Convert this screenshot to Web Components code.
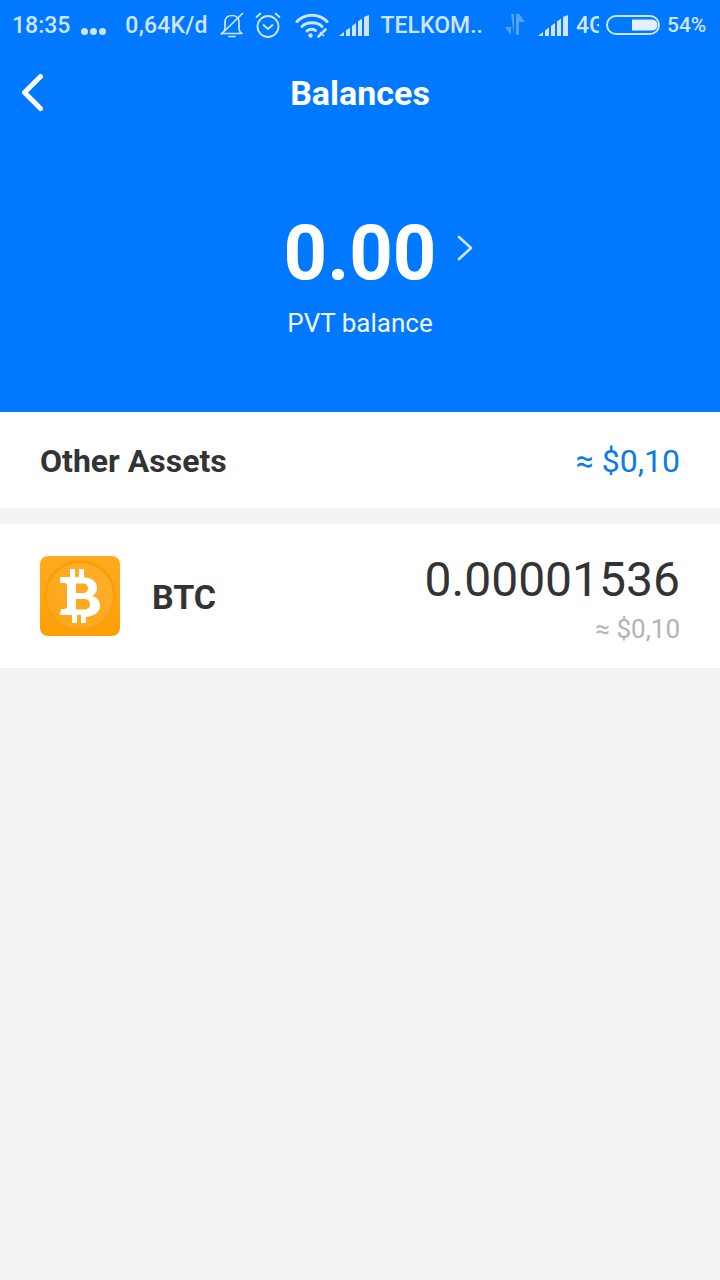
<!DOCTYPE html>
<html>
<head>
<meta charset="utf-8">
<style>
    html, body { margin: 0; padding: 0; height: 100%; background: #f3f3f3; }
    body { font-family: Roboto, "Liberation Sans", sans-serif; }
    balances-page { height: 1280px; }
</style>
</head>
<body>
<balances-page>
    <status-bar slot="header"></status-bar>
    <balance-header slot="header" title="Balances" amount="0.00" label="PVT balance"></balance-header>
    <assets-summary label="Other Assets" value="≈ $0,10"></assets-summary>
    <asset-row name="BTC" amount="0.00001536" value="≈ $0,10"></asset-row>
</balances-page>

<script>
class BalancesPage extends HTMLElement {
    constructor() {
        super();
        this.attachShadow({mode: 'open'});
        this.shadowRoot.innerHTML = `
            <style>
                :host { display: flex; flex-direction: column; width: 720px; background: #f3f3f3; overflow: hidden; }
                .top { background: #0078ff; display: flex; flex-direction: column; }
            </style>
            <div class="top"><slot name="header"></slot></div>
            <slot></slot>
        `;
    }
}

class StatusBar extends HTMLElement {
    constructor() {
        super();
        this.attachShadow({mode: 'open'});
        const bars = `<svg width="31" height="21" viewBox="0 0 31 21" fill="currentColor"><path d="M0 21l5-4v4zM7 15.500l4-3V21H7zM13 11l4-3v13h-4zM19 6.500l4-3V21h-4zM25 2l5-2v21h-5z"/></svg>`;
        this.shadowRoot.innerHTML = `
            <style>
                :host { display: block; height: 50px; }
                .bar {
                    display: flex;
                    align-items: center;
                    height: 50px;
                    padding-left: 12px;
                    color: #cfe5ff;
                    font: 500 23px Roboto, sans-serif;
                    white-space: nowrap;
                }
                svg { display: block; flex: none; }
                .dots { margin-left: 11px; display: flex; gap: 2px; margin-top: 12px; }
                .dots i { width: 7px; height: 7px; border-radius: 50%; background: currentColor; }
                .speed { margin-left: 19px; letter-spacing: .2px; }
                .bell { margin-left: 12px; }
                .alarm { margin-left: 11px; }
                .wifi { margin-left: 14px; }
                .sig1 { margin-left: 10px; }
                .op { margin-left: 11px; }
                .arrows { margin-left: 22px; opacity: .4; }
                .sig2 { margin-left: 13px; }
                .net { margin-left: 7px; width: 23px; overflow: hidden; }
                .batt { margin-left: 7px; }
                .pct { margin-left: 7px; font-size: 21px; }
            </style>
            <div class="bar">
                <span>18:35</span>
                <span class="dots"><i></i><i></i><i></i></span>
                <span class="speed">0,64K/d</span>
                <svg class="bell" width="24" height="26" viewBox="0 0 24 26" fill="none" stroke="currentColor" stroke-width="1.7" stroke-linecap="round" stroke-linejoin="round"><path d="M1.500 21.500c2-1 3.500-3 3.500-6V10c0-4 3-6.500 7-6.500s7 2.500 7 6.500v5.500c0 3 1 5 3 6z"/><path d="M9 24.500h6"/><path d="M1.500 22L22.500 1.500"/></svg>
                <svg class="alarm" width="26" height="26" viewBox="0 0 26 26" fill="none" stroke="currentColor" stroke-width="1.8" stroke-linecap="round" stroke-linejoin="round"><circle cx="13" cy="14.500" r="10.500"/><path d="M8.500 13l4.500 4 4.500-4"/><path d="M1.500 5l4-3.500M24.500 5l-4-3.500"/></svg>
                <svg class="wifi" width="34" height="26" viewBox="0 0 34 26" fill="none" stroke="currentColor" stroke-width="3" stroke-linecap="round"><path d="M2 9.500c8-8.500 22-8.500 30 0"/><path d="M7 14.500c5-5 15-5 20 0"/><path d="M12 19c2.500-2 6-2 8.500-.5"/><circle cx="15.500" cy="23.500" r="2.200" fill="currentColor" stroke="none"/><path d="M23.500 24.500l2.500-2.500M28 20l2.500-2.500" stroke-width="2.600"/><path d="M25.500 20.500l3 3" stroke-width="1.600"/></svg>
                <span class="sig1">${bars}</span>
                <span class="op">TELKOM..</span>
                <svg class="arrows" width="20" height="22" viewBox="0 0 20 22" fill="currentColor"><path d="M6 0h3v21zM6 0v13H0l6 8z" /><path d="M11 0l3 0v8h6l-6-8v21h-3z"/></svg>
                <span class="sig2">${bars}</span>
                <span class="net">4G</span>
                <svg class="batt" width="54" height="20" viewBox="0 0 54 20"><rect x="1" y="1" width="52" height="18" rx="9" fill="none" stroke="currentColor" stroke-width="2"/><path d="M26 4.500h20a5.500 5.500 0 0 1 0 11H26z" fill="#e3efff"/></svg>
                <span class="pct">54%</span>
            </div>
        `;
    }
}

class BalanceHeader extends HTMLElement {
    constructor() {
        super();
        this.attachShadow({mode: 'open'});
        this.shadowRoot.innerHTML = `
            <style>
                :host { display: block; height: 362px; color: #fff; }
                .nav { position: relative; display: flex; justify-content: center; align-items: center; height: 86px; }
                .nav svg { position: absolute; left: 20px; top: 24px; }
                .title { font: 700 34px Roboto, sans-serif; }
                .summary { display: flex; flex-direction: column; align-items: center; margin-top: 70px; }
                .amount { position: relative; font: 700 76px/94px Roboto, sans-serif; }
                .amount svg { position: absolute; left: 173px; top: 29px; }
                .label { font: 400 26px/30px Roboto, sans-serif; margin-top: 8px; opacity: .95; }
            </style>
            <div class="nav">
                <svg width="24" height="38" viewBox="0 0 24 38" fill="none" stroke="#fff" stroke-width="5" stroke-linecap="round" stroke-linejoin="round"><path d="M20.500 2.500L4.500 18.500l16 16"/></svg>
                <span class="title"></span>
            </div>
            <div class="summary">
                <div class="amount"><span class="num"></span>
                    <svg width="16" height="26" viewBox="0 0 16 26" fill="none" stroke="#cfe4ff" stroke-width="2.600" stroke-linecap="round" stroke-linejoin="round"><path d="M2 2l12 11L2 24"/></svg>
                </div>
                <div class="label"></div>
            </div>
        `;
        this.shadowRoot.querySelector('.title').textContent = this.getAttribute('title');
        this.shadowRoot.querySelector('.num').textContent = this.getAttribute('amount');
        this.shadowRoot.querySelector('.label').textContent = this.getAttribute('label');
    }
}

class AssetsSummary extends HTMLElement {
    constructor() {
        super();
        this.attachShadow({mode: 'open'});
        this.shadowRoot.innerHTML = `
            <style>
                :host {
                    display: flex;
                    align-items: center;
                    justify-content: space-between;
                    height: 96px;
                    padding: 0 40px;
                    background: #fff;
                    margin-bottom: 16px;
                }
                span { padding-top: 2px; }
                .label { font: 700 32px Roboto, sans-serif; color: #333; }
                .value { font: 400 32px Roboto, sans-serif; color: #0a7be8; }
            </style>
            <span class="label"></span>
            <span class="value"></span>
        `;
        this.shadowRoot.querySelector('.label').textContent = this.getAttribute('label');
        this.shadowRoot.querySelector('.value').textContent = this.getAttribute('value');
    }
}

class AssetRow extends HTMLElement {
    constructor() {
        super();
        this.attachShadow({mode: 'open'});
        this.shadowRoot.innerHTML = `
            <style>
                :host {
                    display: flex;
                    align-items: center;
                    height: 144px;
                    padding: 0 40px;
                    background: #fff;
                    border-bottom: 1px solid #eeeeee;
                }
                .logo { width: 80px; height: 80px; flex: none; display: block; }
                .name { margin-left: 32px; padding-top: 2px; font: 700 34px Roboto, sans-serif; color: #333; }
                .right { margin-left: auto; text-align: right; padding-top: 5px; }
                .amount { font: 400 48px/56px Roboto, sans-serif; color: #333; }
                .value { font: 400 26px/32px Roboto, sans-serif; color: #b3b3b3; margin-top: 5px; }
            </style>
            <svg class="logo" viewBox="0 0 80 80">
                <defs>
                    <linearGradient id="sq" x1="0" y1="0" x2="0" y2="1"><stop offset="0" stop-color="#ffab1f"/><stop offset="1" stop-color="#fd9f06"/></linearGradient>
                    <linearGradient id="disc" x1="1" y1="0" x2="0" y2="1"><stop offset="0" stop-color="#ffb02e"/><stop offset="1" stop-color="#fca515"/></linearGradient>
                </defs>
                <rect width="80" height="80" rx="8" fill="url(#sq)"/>
                <circle cx="40" cy="40" r="36" fill="#fa9f0b"/>
                <circle cx="40" cy="40" r="33" fill="url(#disc)"/>
                <path fill="#fff" fill-rule="evenodd" d="M30 13h5v8h4v-8h5v8.300c8 .7 13 4.200 13 10.700 0 3.800-2 6.500-5 8 5 1.300 8 4.500 8 9.500 0 6.800-5.500 10.900-14 11.400V67h-5v-8h-4v8h-5v-8H20l1-6h3c2 0 3-.8 3-2.500V29.500C27 27.800 26 27 24 27h-4v-6h10zM36 27.500v9.500h7c3 0 5-1.800 5-4.800s-2-4.700-5-4.700zM36 43v10.500h8c3.500 0 6-2 6-5.300S47.500 43 44 43z"/>
            </svg>
            <span class="name"></span>
            <div class="right">
                <div class="amount"></div>
                <div class="value"></div>
            </div>
        `;
        this.shadowRoot.querySelector('.name').textContent = this.getAttribute('name');
        this.shadowRoot.querySelector('.amount').textContent = this.getAttribute('amount');
        this.shadowRoot.querySelector('.value').textContent = this.getAttribute('value');
    }
}

customElements.define('balances-page', BalancesPage);
customElements.define('status-bar', StatusBar);
customElements.define('balance-header', BalanceHeader);
customElements.define('assets-summary', AssetsSummary);
customElements.define('asset-row', AssetRow);
</script>
</body>
</html>
